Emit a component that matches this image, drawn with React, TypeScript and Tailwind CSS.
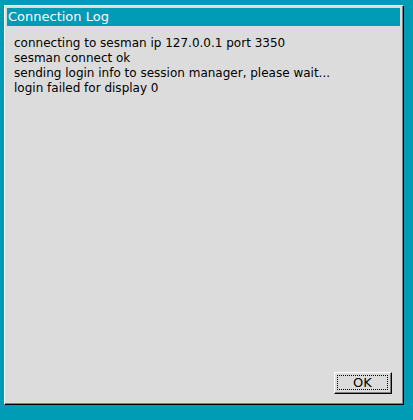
import React from "react";

const lines = [
  "connecting to sesman ip 127.0.0.1 port 3350",
  "sesman connect ok",
  "sending login info to session manager, please wait...",
  "login failed for display 0",
];

export default function App() {
  return (
    <div
      className="w-[413px] h-[420px] bg-[#009cb5] pt-[5px] pl-[4px]"
      style={{ fontFamily: "'DejaVu Sans', sans-serif" }}
    >
      {/* window bevel */}
      <div className="w-[400px] h-[400px] border-t border-l border-t-white border-l-white border-r border-b border-r-black border-b-black">
        <div className="w-full h-full border-r border-b border-r-[#808080] border-b-[#808080] bg-[#dcdcdc] p-[2px] flex flex-col">
          <div className="h-[18px] bg-[#009cb5] text-white text-[13px] leading-[18px] pl-[1px]">
            Connection Log
          </div>
          <div className="flex-1 flex flex-col pl-[7px] pr-[8px] pt-[10px] pb-[7px]">
            <div className="flex-1 text-black text-[12px] leading-[15px]">
              {lines.map((l) => (
                <div key={l}>{l}</div>
              ))}
            </div>
            <div className="flex justify-end">
              <button className="w-[58px] h-[22px] bg-[#dcdcdc] border-t border-l border-t-white border-l-white border-r border-b border-r-black border-b-black p-0">
                <div className="w-full h-full border-r border-b border-r-[#808080] border-b-[#808080] p-[2px]">
                  <div className="w-full h-full border border-dotted border-black flex items-center justify-center text-[13px] text-black leading-none">
                    OK
                  </div>
                </div>
              </button>
            </div>
          </div>
        </div>
      </div>
    </div>
  );
}
